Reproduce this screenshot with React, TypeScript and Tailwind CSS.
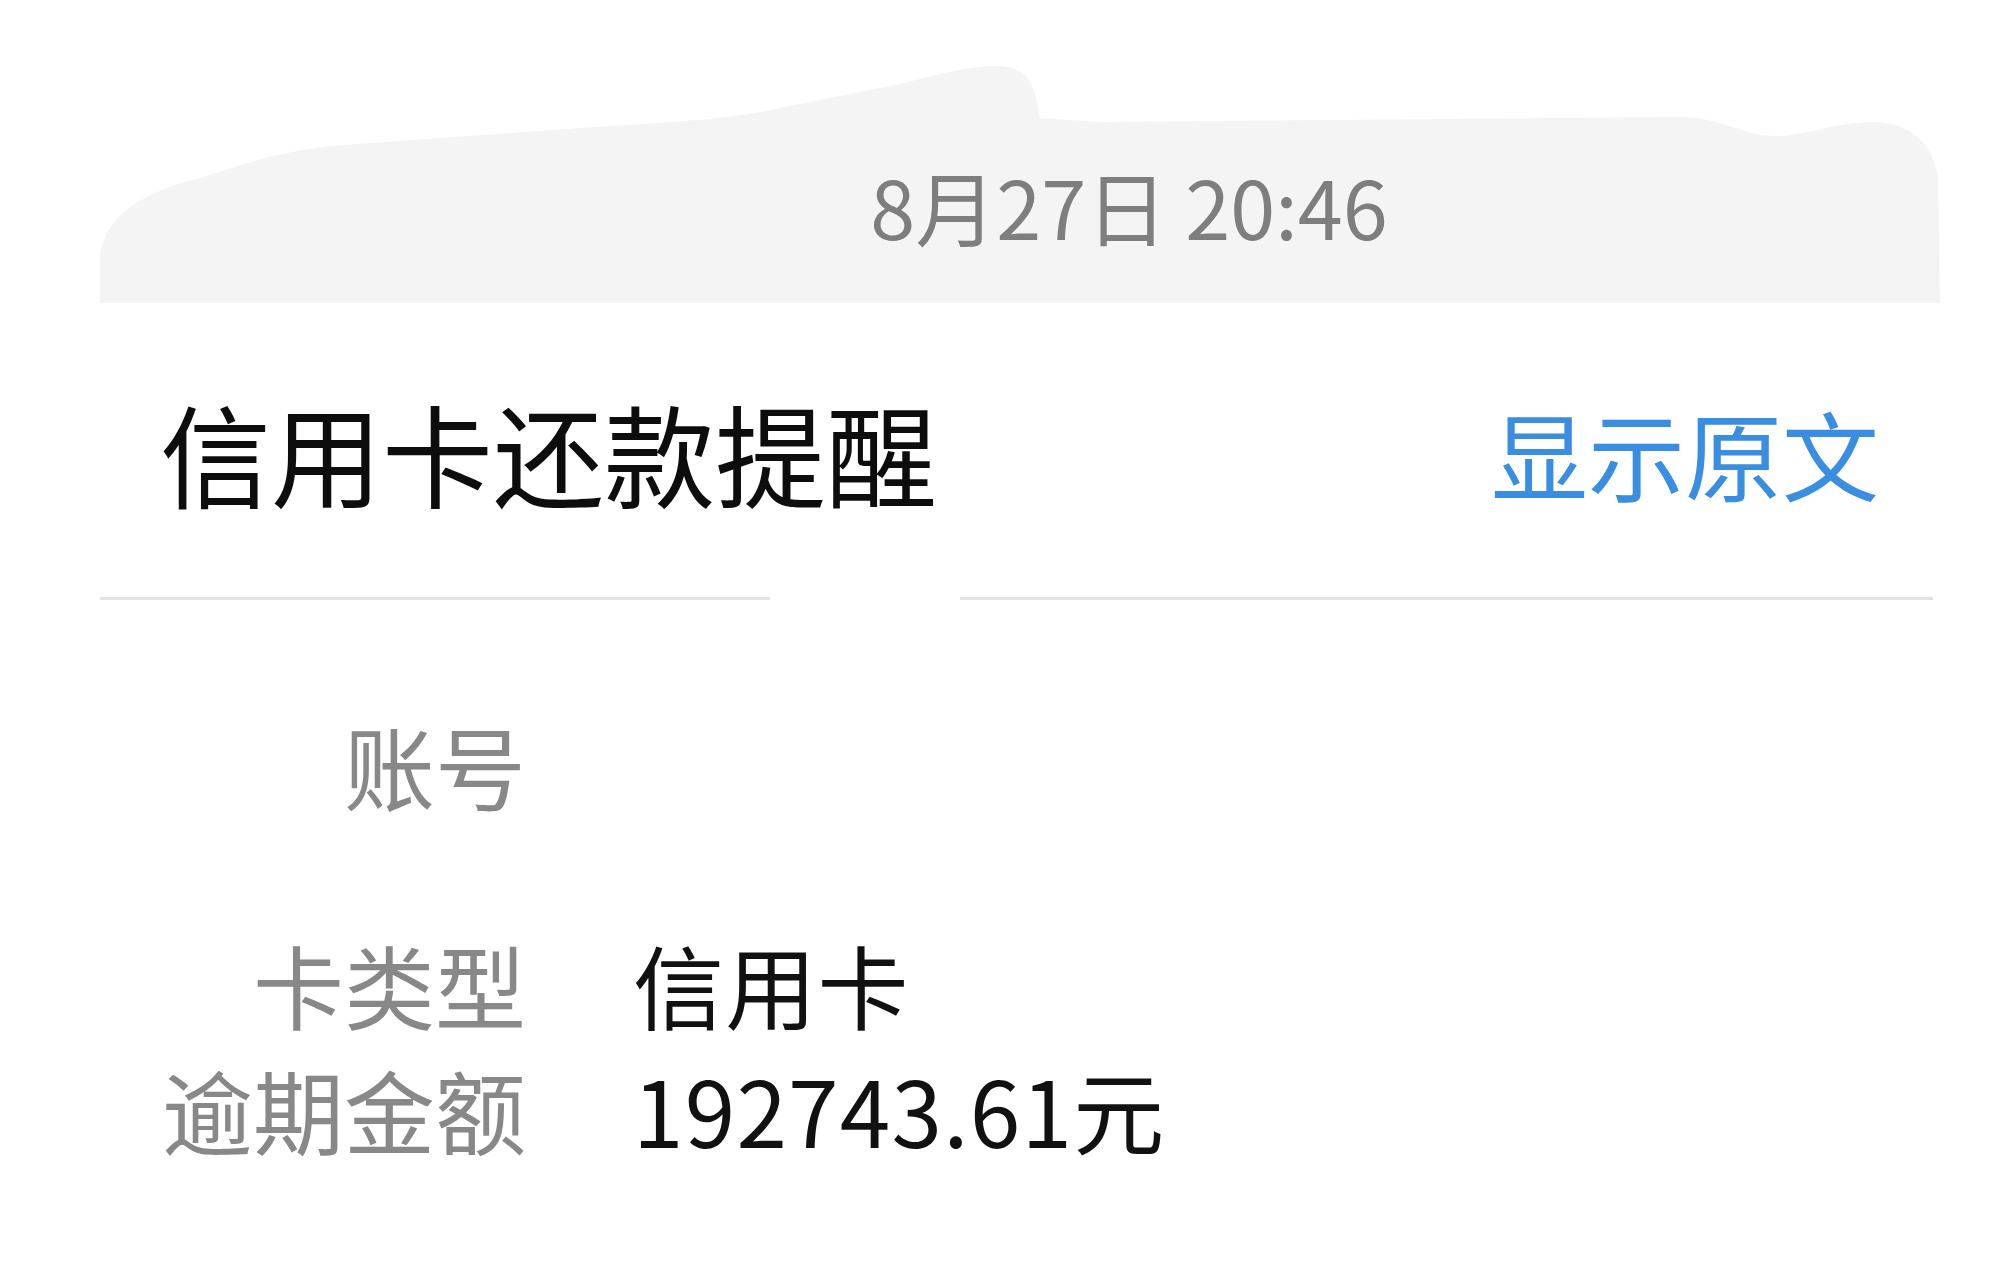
const ROWS = [
  { label: "账号", value: "", gap: "mt-[119px]" },
  { label: "卡类型", value: "信用卡", gap: "mt-[128px]" },
  { label: "逾期金额", value: "192743.61元", gap: "mt-[34px]" },
];

function Smudge() {
  // the painted-over sender area behind the timestamp
  return (
    <svg
      className="absolute inset-0 h-full w-full"
      viewBox="0 0 1845 303"
      preserveAspectRatio="none"
    >
      <path
        fill="#f4f4f4"
        d="M0 303 L0 262 C0 225 30 195 100 178 C150 162 180 152 230 146 L480 128 C580 122 640 118 680 108 L800 84 C840 74 870 66 895 66 C925 66 935 80 940 118 L1000 122 L1580 117 C1620 117 1640 135 1675 136 C1710 136 1725 124 1770 122 C1810 122 1830 140 1838 175 L1840 303 Z"
      />
    </svg>
  );
}

export default function App() {
  return (
    <div className="min-h-[1280px] w-full bg-white font-['Noto_Sans_CJK_SC',sans-serif]">
      <div className="pl-[100px] pr-[68px]">
        <header className="relative h-[303px]">
          <Smudge />
          <div className="relative flex justify-center pl-[213px] pt-[164px]">
            <span className="whitespace-pre text-[81px] leading-none text-[#7e7e7e]">8月27日 20:46</span>
          </div>
        </header>

        <div className="flex items-center justify-between pt-[93px] pb-[90px] pl-[60px] pr-[66px]">
          <h1 className="text-[111px] font-normal leading-none text-[#0d0d0d]">信用卡还款提醒</h1>
          <span className="text-[97px] leading-none text-[#3a8ee2]">显示原文</span>
        </div>

        <div className="flex h-[3px] mr-[12px]">
          <div className="w-[670px] bg-[#e3e3e3]" />
          <div className="w-[190px]" />
          <div className="flex-1 bg-[#e3e3e3]" />
        </div>

        <div className="flex flex-col">
          {ROWS.map((row) => (
            <div key={row.label} className={`flex gap-[107px] ${row.gap}`}>
              <span className="w-[426px] text-right text-[91px] leading-none text-[#888]">{row.label}</span>
              <span className="text-[91px] leading-none tracking-[1.2px] text-[#111]">{row.value}</span>
            </div>
          ))}
        </div>
      </div>
    </div>
  );
}
